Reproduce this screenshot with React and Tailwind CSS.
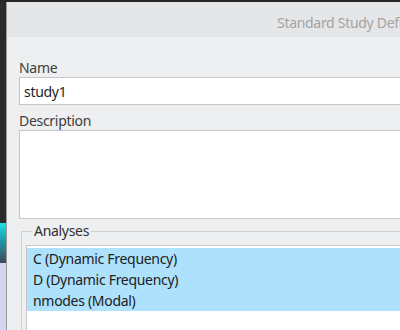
import React from 'react';

const analyses = [
  'C (Dynamic Frequency)',
  'D (Dynamic Frequency)',
  'nmodes (Modal)'
];

const App = () => {
  return (
    <div
      className="w-[400px] h-[330px] overflow-hidden bg-[#2b2b2b] flex flex-col tracking-[-0.3px]"
      style={{ fontFamily: '"Noto Sans", "Open Sans", sans-serif' }}
    >
      {/* top edge of the window behind */}
      <div className="h-[2px] shrink-0 bg-[#262626]" />

      <div className="flex flex-1 min-h-0">
        {/* left sliver of the app behind */}
        <div className="w-[6px] shrink-0 flex flex-col">
          <div className="h-[221px] bg-[#2a2a2a]" />
          <div className="h-[40px] bg-gradient-to-b from-[#1ee0e6] via-[#1a8fa0] to-[#3a4a5a]" />
          <div className="flex-1 bg-[#d6d5ef]" />
        </div>

        {/* dialog */}
        <div className="flex-1 min-w-0 flex flex-col border-l border-[#9a9a9a] bg-[#eeeff1] overflow-hidden">
          {/* title bar */}
          <div className="h-[35px] shrink-0 bg-[#e5e6e8] pl-[270px] pt-[12px] whitespace-nowrap text-[14px] leading-[18px] text-[#a3a3a3]">
            Standard Study Definition
          </div>

          {/* body */}
          <div className="flex-1 pl-[12px] pt-[22px] text-[#404040] text-[14px]">
            <div className="leading-[18px]">Name</div>
            <div className="mr-[-20px] h-[28px] border border-[#c6c6c6] bg-white pl-[4px] flex items-center text-[#1e1e1e] text-[14px]">
              study1
            </div>

            <div className="mt-[6px] leading-[19px]">Description</div>
            <div className="mr-[-20px] h-[89px] border border-[#c6c6c6] bg-white" />

            {/* analyses group */}
            <div className="relative mt-[12px] ml-[2px] mr-[-20px] border-l border-t border-[#d2d2d2] pt-[13px] pl-[4px] pb-4">
              <div className="absolute left-[10px] top-[-10px] bg-[#eeeff1] px-[2px] leading-[18px] text-[14px] text-[#303030]">
                Analyses
              </div>
              <div className="border border-[#c6c6c6] bg-white h-[100px] pt-[2px]">
                <div className="bg-[#aee1fb] text-[#202020] text-[14px]">
                  {analyses.map((a) => (
                    <div key={a} className="h-[21px] leading-[21px] pl-[6px] whitespace-nowrap">
                      {a}
                    </div>
                  ))}
                </div>
              </div>
            </div>
          </div>
        </div>
      </div>
    </div>
  );
};

export default App;
